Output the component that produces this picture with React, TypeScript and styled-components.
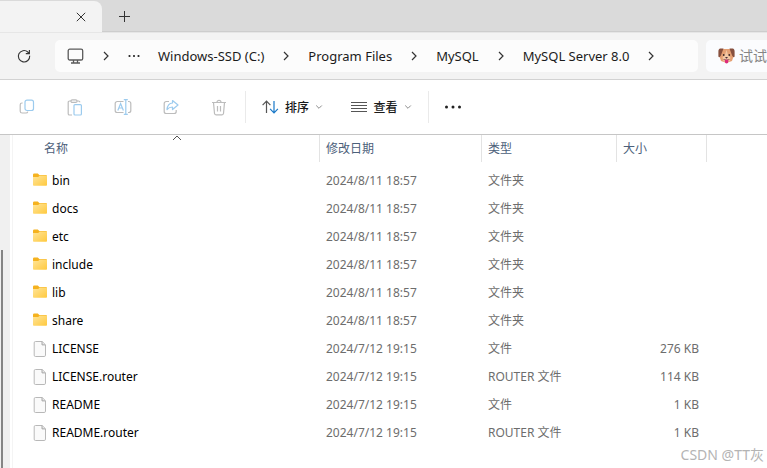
import React from "react";
import styled, { createGlobalStyle } from "styled-components";

const GlobalStyle = createGlobalStyle`
  *, *::before, *::after { box-sizing: border-box; }
  html, body, #root { height: 100%; }
  body {
    margin: 0;
    overflow: hidden;
    background: #fff;
    color: #1b1b1b;
    font-family: "Noto Sans", "Noto Sans CJK SC", sans-serif;
    font-size: 12px;
  }
  button, input { font: inherit; color: inherit; }
`;

const Window = styled.div`
  position: relative;
  display: flex;
  flex-direction: column;
  height: 100vh;
  overflow: hidden;
`;

const PlainButton = styled.button`
  display: inline-flex;
  align-items: center;
  justify-content: center;
  flex: none;
  padding: 0;
  border: 0;
  background: none;
`;

const TabStrip = styled.header`
  display: flex;
  align-items: stretch;
  height: 33px;
  flex: none;
  background: #dadada;
  border-bottom: 1px solid #e6e6e6;
  box-shadow: inset 0 -1px #cdcdcd;
`;

const Tab = styled.div`
  display: flex;
  align-items: center;
  justify-content: flex-end;
  width: 102px;
  margin-top: 1px;
  padding-right: 13px;
  background: #f3f3f3;
  border-top-right-radius: 8px;
`;

const TabButton = styled(PlainButton)`
  width: 16px;
  height: 30px;
`;

const NewTabButton = styled(PlainButton)`
  width: 45px;
  height: 33px;
`;

const NavBar = styled.div`
  display: flex;
  align-items: center;
  gap: 8px;
  height: 47px;
  flex: none;
  background: #f3f3f3;
  border-bottom: 1px solid #d2d2d2;
`;

const RefreshButton = styled(PlainButton)`
  width: 30px;
  height: 32px;
  margin-left: 9px;
`;

const AddressBox = styled.nav`
  display: flex;
  align-items: center;
  flex: 1;
  height: 32px;
  margin-left: 8px;
  padding-left: 12px;
  background: #fcfcfc;
  border-radius: 5px;
  overflow: hidden;
`;

const Crumbs = styled.ol`
  display: flex;
  align-items: center;
  gap: 18px;
  margin: 0;
  padding: 0;
  list-style: none;
`;

const Crumb = styled.li`
  display: flex;
  align-items: center;
  gap: 18px;
`;

const CrumbLink = styled.a`
  color: #1b1b1b;
  font-size: 13px;
  line-height: 20px;
  text-decoration: none;
  white-space: nowrap;
`;

const SearchBox = styled.label`
  display: flex;
  align-items: center;
  gap: 4px;
  width: 61px;
  height: 32px;
  padding-left: 12px;
  background: #fbfcfe;
  border-radius: 5px 0 0 5px;
`;

const SearchInput = styled.input`
  flex: 1;
  min-width: 0;
  padding: 0;
  border: 0;
  outline: 0;
  background: none;
  font-size: 14px;
  line-height: 20px;
  &::placeholder { color: #858585; opacity: 1; }
`;

const Toolbar = styled.div`
  display: flex;
  align-items: center;
  height: 55px;
  flex: none;
  padding-left: 3px;
  background: #fff;
  border-bottom: 1px solid #c6c6c6;
`;

const ToolButton = styled(PlainButton)`
  width: 48px;
  height: 40px;
`;

const MenuButton = styled(PlainButton)`
  gap: 6px;
  height: 40px;
  width: 89px;
  padding-left: 4px;
  color: #1b1b1b;
  font-size: 12px;
  font-weight: 500;
`;

const Divider = styled.span<{ $before?: number }>`
  width: 1px;
  height: 32px;
  margin-left: ${(p) => p.$before ?? 0}px;
  background: #eaeaea;
`;

const Content = styled.div`
  display: flex;
  flex: 1;
  min-height: 0;
`;

const SidebarEdge = styled.aside`
  width: 10px;
  flex: none;
  padding: 115px 0 0 1px;
  background: #f0f0f0;
`;

const ScrollThumb = styled.div`
  width: 2px;
  height: 100%;
  background: #858585;
`;

const Listing = styled.main`
  flex: 1;
  min-width: 0;
  margin-left: 2px;
  border-left: 1px solid #f4f4f4;
`;

const FileTable = styled.table`
  width: 100%;
  table-layout: fixed;
  border-collapse: separate;
  border-spacing: 0;
`;

const Column = styled.col<{ $width?: number }>`
  width: ${(p) => (p.$width ? `${p.$width}px` : "auto")};
`;

const HeaderCell = styled.th<{ $indent?: number; $last?: boolean }>`
  position: relative;
  height: 27px;
  padding: 0 0 0 ${(p) => p.$indent ?? 6}px;
  border-right: ${(p) => (p.$last ? "0" : "1px solid #e3e3e3")};
  color: #4c607a;
  font-weight: 400;
  line-height: 18px;
  text-align: left;
`;

const SortMark = styled.svg`
  position: absolute;
  top: 0;
  left: 52%;
`;

const Spacer = styled.tr`
  height: 5px;
`;

const Cell = styled.td<{ $right?: boolean }>`
  height: 28px;
  padding: 0 ${(p) => (p.$right ? 8 : 0)}px 0 6px;
  color: #6d6d6d;
  line-height: 18px;
  text-align: ${(p) => (p.$right ? "right" : "left")};
  white-space: nowrap;
`;

const NameCell = styled(Cell)`
  padding-left: 19px;
`;

const FileLink = styled.a`
  display: flex;
  align-items: center;
  gap: 4px;
  color: #000;
  font-size: 12px;
  text-decoration: none;
`;

const Watermark = styled.div`
  position: absolute;
  right: 3px;
  bottom: 3px;
  color: #b4b4b4;
  font-size: 14px;
  line-height: 20px;
`;

const Chevron = () => (
  <svg width="8" height="12" viewBox="0 0 8 12" fill="none" stroke="#333" strokeWidth="1.2">
    <path d="M2 2l4 4-4 4" />
  </svg>
);

const SmallCaret = () => (
  <svg width="8" height="6" viewBox="0 0 8 6" fill="none" stroke="#8c8c8c">
    <path d="M1.200 1.500L4 4.300 6.800 1.500" />
  </svg>
);

const CloseIcon = () => (
  <svg width="10" height="10" viewBox="0 0 10 10" stroke="#333">
    <path d="M.8.8l8.400 8.400M9.200.8L.8 9.200" />
  </svg>
);

const PlusIcon = () => (
  <svg width="11" height="11" viewBox="0 0 11 11" stroke="#333">
    <path d="M5.500 0v11M0 5.500h11" />
  </svg>
);

const RefreshIcon = () => (
  <svg width="14" height="14" viewBox="0 0 14 14" fill="none" stroke="#333" strokeWidth="1.100">
    <path d="M12.700 6.800A5.700 5.700 0 1 1 10.800 3l1.500 1.500" />
    <path d="M12.400 1v3.600H8.800" />
  </svg>
);

const MonitorIcon = () => (
  <svg width="17" height="17" viewBox="0 0 17 17" fill="none" stroke="#5a5a5a" strokeWidth="1.300">
    <rect x="1.200" y="1.200" width="14.500" height="10.800" rx="1.600" />
    <path d="M4 15h9M6.500 12v3M10.500 12v3" />
  </svg>
);

const Dots = ({ large = false }: { large?: boolean }) => (
  <svg width={large ? 18 : 12} height="4" viewBox={large ? "0 0 18 4" : "0 0 12 4"} fill="#222">
    <circle cx={large ? 2.5 : 1.5} cy="2" r={large ? 1.5 : 1.1} />
    <circle cx={large ? 9 : 6} cy="2" r={large ? 1.5 : 1.1} />
    <circle cx={large ? 15.5 : 10.5} cy="2" r={large ? 1.5 : 1.1} />
  </svg>
);

const DogIcon = () => (
  <svg width="17" height="16" viewBox="0 0 17 16">
    <path d="M3.500 1h10l2 7.500-1.500 4.500-5.500 2L3 13 1.500 8.500z" fill="#e5a073" />
    <path d="M8.500 2l1.600 5 2.400 2.500-1 4H5.500l-1-4L6.900 7z" fill="#f3c8a4" />
    <path d="M5.500.6H2.400C1 .8.4 2 .4 3.500v5C1 9.800 2.400 9 2.900 7.600zM11.500.6h3.100c1.400.2 2 1.400 2 2.900v5c-.6 1.300-2 .5-2.500-.9z" fill="#87503e" />
    <circle cx="5.700" cy="7" r=".9" fill="#3d2b2b" />
    <circle cx="11.300" cy="7" r=".9" fill="#3d2b2b" />
    <path d="M7 9h3l-1.500 1.700z" fill="#49303a" />
    <path d="M5.500 11.500q3 1 6 0" fill="none" stroke="#80504a" strokeWidth=".8" />
    <path d="M6.900 11.800h3.400v2a1.700 1.700 0 0 1-3.400 0z" fill="#dc2a7c" />
  </svg>
);

const GREY = "#bcbcbc";
const BLUE = "#9ccbee";

const CopyIcon = () => (
  <svg width="16" height="16" viewBox="0 0 16 16" fill="none" strokeWidth="1.200">
    <path d="M3.600 4H3a1.800 1.800 0 0 0-1.800 1.800v6.400A1.900 1.900 0 0 0 3.100 14h3.800A1.900 1.900 0 0 0 8.800 12.600" stroke={GREY} />
    <rect x="6" y="1.200" width="8.500" height="10.300" rx="2" stroke={BLUE} />
  </svg>
);

const PasteIcon = () => (
  <svg width="16" height="17" viewBox="0 0 16 17" fill="none" strokeWidth="1.200">
    <path d="M4 2H2.500A1.300 1.300 0 0 0 1.200 3.300v11.400A1.300 1.300 0 0 0 2.500 16H5M10 2h1.500a1.300 1.300 0 0 1 1.300 1.300" stroke={GREY} />
    <rect x="4" y=".8" width="6" height="2.600" rx="1.200" stroke={GREY} />
    <rect x="7" y="5.600" width="7.400" height="10.400" rx="1" stroke={BLUE} />
  </svg>
);

const RenameIcon = () => (
  <svg width="18" height="16" viewBox="0 0 18 16" fill="none" strokeWidth="1.200">
    <path d="M9.500 2.500H3.200a2 2 0 0 0-2 2v7a2 2 0 0 0 2 2h6.300M14 2.500h.8a2 2 0 0 1 2 2v7a2 2 0 0 1-2 2H14" stroke={GREY} />
    <path d="M3.800 11.500l2.800-7 2.800 7M4.800 9h3.600M11.800.8v14.400M9.800.6h4M9.800 15.400h4" stroke={BLUE} />
  </svg>
);

const ShareIcon = () => (
  <svg width="16" height="16" viewBox="0 0 16 16" fill="none" strokeWidth="1.200" strokeLinejoin="round">
    <path d="M6 2.500H3.200a2 2 0 0 0-2 2v8a2 2 0 0 0 2 2h8a2 2 0 0 0 2-2V11" stroke={GREY} />
    <path d="M9.500 1.500L15 6l-5.500 4.500V8C7 8 5.400 8.800 4 10.500 4.300 7 6 4.300 9.500 4z" stroke={BLUE} />
  </svg>
);

const TrashIcon = () => (
  <svg width="16" height="17" viewBox="0 0 16 17" fill="none" stroke={GREY} strokeWidth="1.200">
    <path d="M1 3.500h14M2.500 3.500l1 11a1.500 1.500 0 0 0 1.500 1.300h6a1.500 1.500 0 0 0 1.500-1.300l1-11M6 3.300a2 2 0 0 1 4 0M6.500 7v5.500M9.500 7v5.500" />
  </svg>
);

const SortIcon = () => (
  <svg width="17" height="14" viewBox="0 0 17 14" fill="none" strokeWidth="1.200">
    <path d="M4.500 13V1.200M.6 5.200l3.900-4 3.900 4" stroke="#555" />
    <path d="M12 1v11.800M8.100 8.800l3.900 4 3.900-4" stroke="#1878c8" />
  </svg>
);

const ListIcon = () => (
  <svg width="16" height="12" viewBox="0 0 16 12" stroke="#555">
    <path d="M0 1.500h16M0 4.500h16M0 7.500h16M0 10.500h16" />
  </svg>
);

const FolderIcon = () => (
  <svg width="16" height="16" viewBox="0 0 16 16">
    <defs>
      <linearGradient id="folderFront" x1="0" y1="0" x2="1" y2="1">
        <stop offset="0" stopColor="#ffe59a" />
        <stop offset="1" stopColor="#ffc93e" />
      </linearGradient>
    </defs>
    <path d="M1 1.700A1.200 1.200 0 0 1 2.200.5h3.600L7.300 2h6.500A1.200 1.200 0 0 1 15 3.200V7H1z" fill="#f5b21f" />
    <path d="M1 4h5.200l1.500-1.600H15V12a.8.8 0 0 1-.8.800H1.800A.8.8 0 0 1 1 12z" fill="url(#folderFront)" />
  </svg>
);

const FileIcon = () => (
  <svg width="16" height="18" viewBox="0 0 16 18">
    <path d="M3.500 1.500h6.700l3.300 3.300v10.400a1.300 1.300 0 0 1-1.300 1.300H3.500a1.300 1.300 0 0 1-1.300-1.300V2.800a1.300 1.300 0 0 1 1.300-1.300z" fill="#fafafa" stroke="#b8b8b8" />
    <path d="M10 1.600v3.300h3.400" fill="#e6e6e6" stroke="#a8a8a8" />
  </svg>
);

const tools = [
  { label: "复制", Icon: CopyIcon },
  { label: "粘贴", Icon: PasteIcon },
  { label: "重命名", Icon: RenameIcon },
  { label: "共享", Icon: ShareIcon },
  { label: "删除", Icon: TrashIcon },
];

const path = ["Windows-SSD (C:)", "Program Files", "MySQL", "MySQL Server 8.0"];

const folders = ["bin", "docs", "etc", "include", "lib", "share"].map((name) => ({
  name, date: "2024/8/11 18:57", type: "文件夹", size: "",
}));

const files = [
  { name: "LICENSE", type: "文件", size: "276 KB" },
  { name: "LICENSE.router", type: "ROUTER 文件", size: "114 KB" },
  { name: "README", type: "文件", size: "1 KB" },
  { name: "README.router", type: "ROUTER 文件", size: "1 KB" },
].map((file) => ({ ...file, date: "2024/7/12 19:15" }));

export default function App() {
  return (
    <Window>
      <GlobalStyle />
      <TabStrip>
        <Tab><TabButton aria-label="关闭标签页"><CloseIcon /></TabButton></Tab>
        <NewTabButton aria-label="新建标签页"><PlusIcon /></NewTabButton>
      </TabStrip>
      <NavBar>
        <RefreshButton aria-label="刷新"><RefreshIcon /></RefreshButton>
        <AddressBox aria-label="路径">
          <Crumbs>
            <Crumb>
              <PlainButton aria-label="此电脑"><MonitorIcon /></PlainButton>
              <Chevron />
            </Crumb>
            <Crumb><PlainButton aria-label="更多位置"><Dots /></PlainButton></Crumb>
            {path.map((name) => (
              <Crumb key={name}>
                <CrumbLink href="#">{name}</CrumbLink>
                <Chevron />
              </Crumb>
            ))}
          </Crumbs>
        </AddressBox>
        <SearchBox>
          <DogIcon />
          <SearchInput type="text" aria-label="搜索" placeholder="试试" />
        </SearchBox>
      </NavBar>
      <Toolbar>
        {tools.map(({ label, Icon }) => (
          <ToolButton key={label} aria-label={label}><Icon /></ToolButton>
        ))}
        <Divider $before={2} />
        <MenuButton><SortIcon />排序<SmallCaret /></MenuButton>
        <MenuButton><ListIcon />查看<SmallCaret /></MenuButton>
        <Divider $before={4} />
        <ToolButton aria-label="更多"><Dots large /></ToolButton>
      </Toolbar>
      <Content>
        <SidebarEdge><ScrollThumb /></SidebarEdge>
        <Listing>
          <FileTable>
            <colgroup>
              <Column $width={307} />
              <Column $width={162} />
              <Column $width={135} />
              <Column $width={90} />
              <Column />
            </colgroup>
            <thead>
              <tr>
                <HeaderCell $indent={31}>
                  名称
                  <SortMark width="10" height="6" viewBox="0 0 10 6" fill="none" stroke="#555">
                    <path d="M1 5l4-4 4 4" />
                  </SortMark>
                </HeaderCell>
                <HeaderCell>修改日期</HeaderCell>
                <HeaderCell>类型</HeaderCell>
                <HeaderCell>大小</HeaderCell>
                <HeaderCell as="td" $last />
              </tr>
            </thead>
            <tbody>
              <Spacer />
              {[...folders, ...files].map((item) => (
                <tr key={item.name}>
                  <NameCell>
                    <FileLink href="#">
                      {item.size ? <FileIcon /> : <FolderIcon />}
                      {item.name}
                    </FileLink>
                  </NameCell>
                  <Cell>{item.date}</Cell>
                  <Cell>{item.type}</Cell>
                  <Cell $right>{item.size}</Cell>
                  <Cell />
                </tr>
              ))}
            </tbody>
          </FileTable>
        </Listing>
      </Content>
      <Watermark>CSDN @TT灰</Watermark>
    </Window>
  );
}
